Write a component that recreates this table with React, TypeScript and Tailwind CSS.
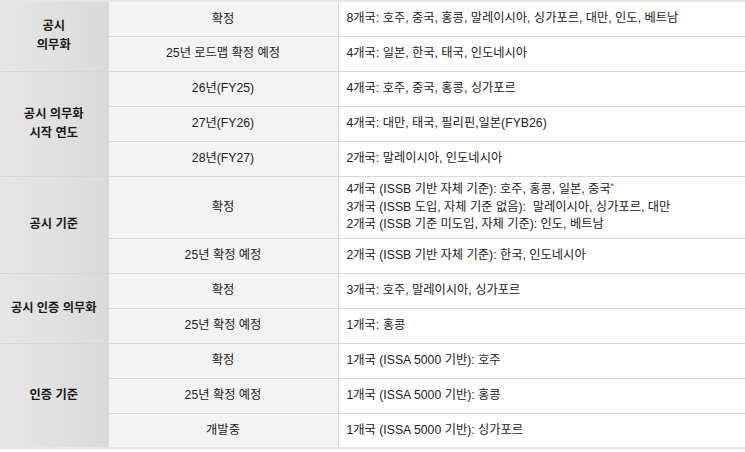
import React from "react";

interface Row {
  label: string;
  value: React.ReactNode;
  tall?: boolean;
}

interface Group {
  title: React.ReactNode;
  rows: Row[];
}

const groups: Group[] = [
  {
    title: (
      <>
        공시
        <br />
        의무화
      </>
    ),
    rows: [
      { label: "확정", value: "8개국: 호주, 중국, 홍콩, 말레이시아, 싱가포르, 대만, 인도, 베트남" },
      { label: "25년 로드맵 확정 예정", value: "4개국: 일본, 한국, 태국, 인도네시아" },
    ],
  },
  {
    title: (
      <>
        공시 의무화
        <br />
        시작 연도
      </>
    ),
    rows: [
      { label: "26년(FY25)", value: "4개국: 호주, 중국, 홍콩, 싱가포르" },
      { label: "27년(FY26)", value: "4개국: 대만, 태국, 필리핀,일본(FYB26)" },
      { label: "28년(FY27)", value: "2개국: 말레이시아, 인도네시아" },
    ],
  },
  {
    title: "공시 기준",
    rows: [
      {
        label: "확정",
        tall: true,
        value: (
          <>
            4개국 (ISSB 기반 자체 기준): 호주, 홍콩, 일본, 중국
            <span className="relative -top-[4px] text-[9px] text-[#e02020]">*</span>
            <br />
            3개국 (ISSB 도입, 자체 기준 없음): &nbsp;말레이시아, 싱가포르, 대만
            <br />
            2개국 (ISSB 기준 미도입, 자체 기준): 인도, 베트남
          </>
        ),
      },
      { label: "25년 확정 예정", value: "2개국 (ISSB 기반 자체 기준): 한국, 인도네시아" },
    ],
  },
  {
    title: "공시 인증 의무화",
    rows: [
      { label: "확정", value: "3개국: 호주, 말레이시아, 싱가포르" },
      { label: "25년 확정 예정", value: "1개국: 홍콩" },
    ],
  },
  {
    title: "인증 기준",
    rows: [
      { label: "확정", value: "1개국 (ISSA 5000 기반): 호주" },
      { label: "25년 확정 예정", value: "1개국 (ISSA 5000 기반): 홍콩" },
      { label: "개발중", value: "1개국 (ISSA 5000 기반): 싱가포르" },
    ],
  },
];

export default function App() {
  return (
    <div
      className="w-[745px] h-[452px] overflow-hidden bg-white text-[12.25px] text-[#222]"
      style={{ fontFamily: '"Liberation Sans", Arial, "Noto Sans CJK KR", sans-serif' }}
    >
      <table className="w-[745px] table-fixed border-collapse border-t-2 border-t-[#e6e6e6] border-b-2 border-b-[#e6e6e6]">
        <colgroup>
          <col className="w-[108px]" />
          <col className="w-[230px]" />
          <col className="w-[407px]" />
        </colgroup>
        <tbody>
          {groups.map((group, gi) =>
            group.rows.map((row, ri) => (
              <tr key={`${gi}-${ri}`} className={row.tall ? "h-[62px]" : "h-[35px]"}>
                {ri === 0 && (
                  <td
                    rowSpan={group.rows.length}
                    className="border-b border-r border-[#d6d6d6] bg-gradient-to-r from-[#e6e6e6] to-[#dadada] text-center align-middle font-bold leading-[19px] text-[#1a1a1a]"
                  >
                    {group.title}
                  </td>
                )}
                <td className="border-b border-r border-[#d9d9d9] bg-[#f3f3f3] text-center align-middle">
                  {row.label}
                </td>
                <td className="border-b border-[#d9d9d9] pl-2 align-middle leading-[17px]">
                  {row.value}
                </td>
              </tr>
            ))
          )}
        </tbody>
      </table>
    </div>
  );
}
